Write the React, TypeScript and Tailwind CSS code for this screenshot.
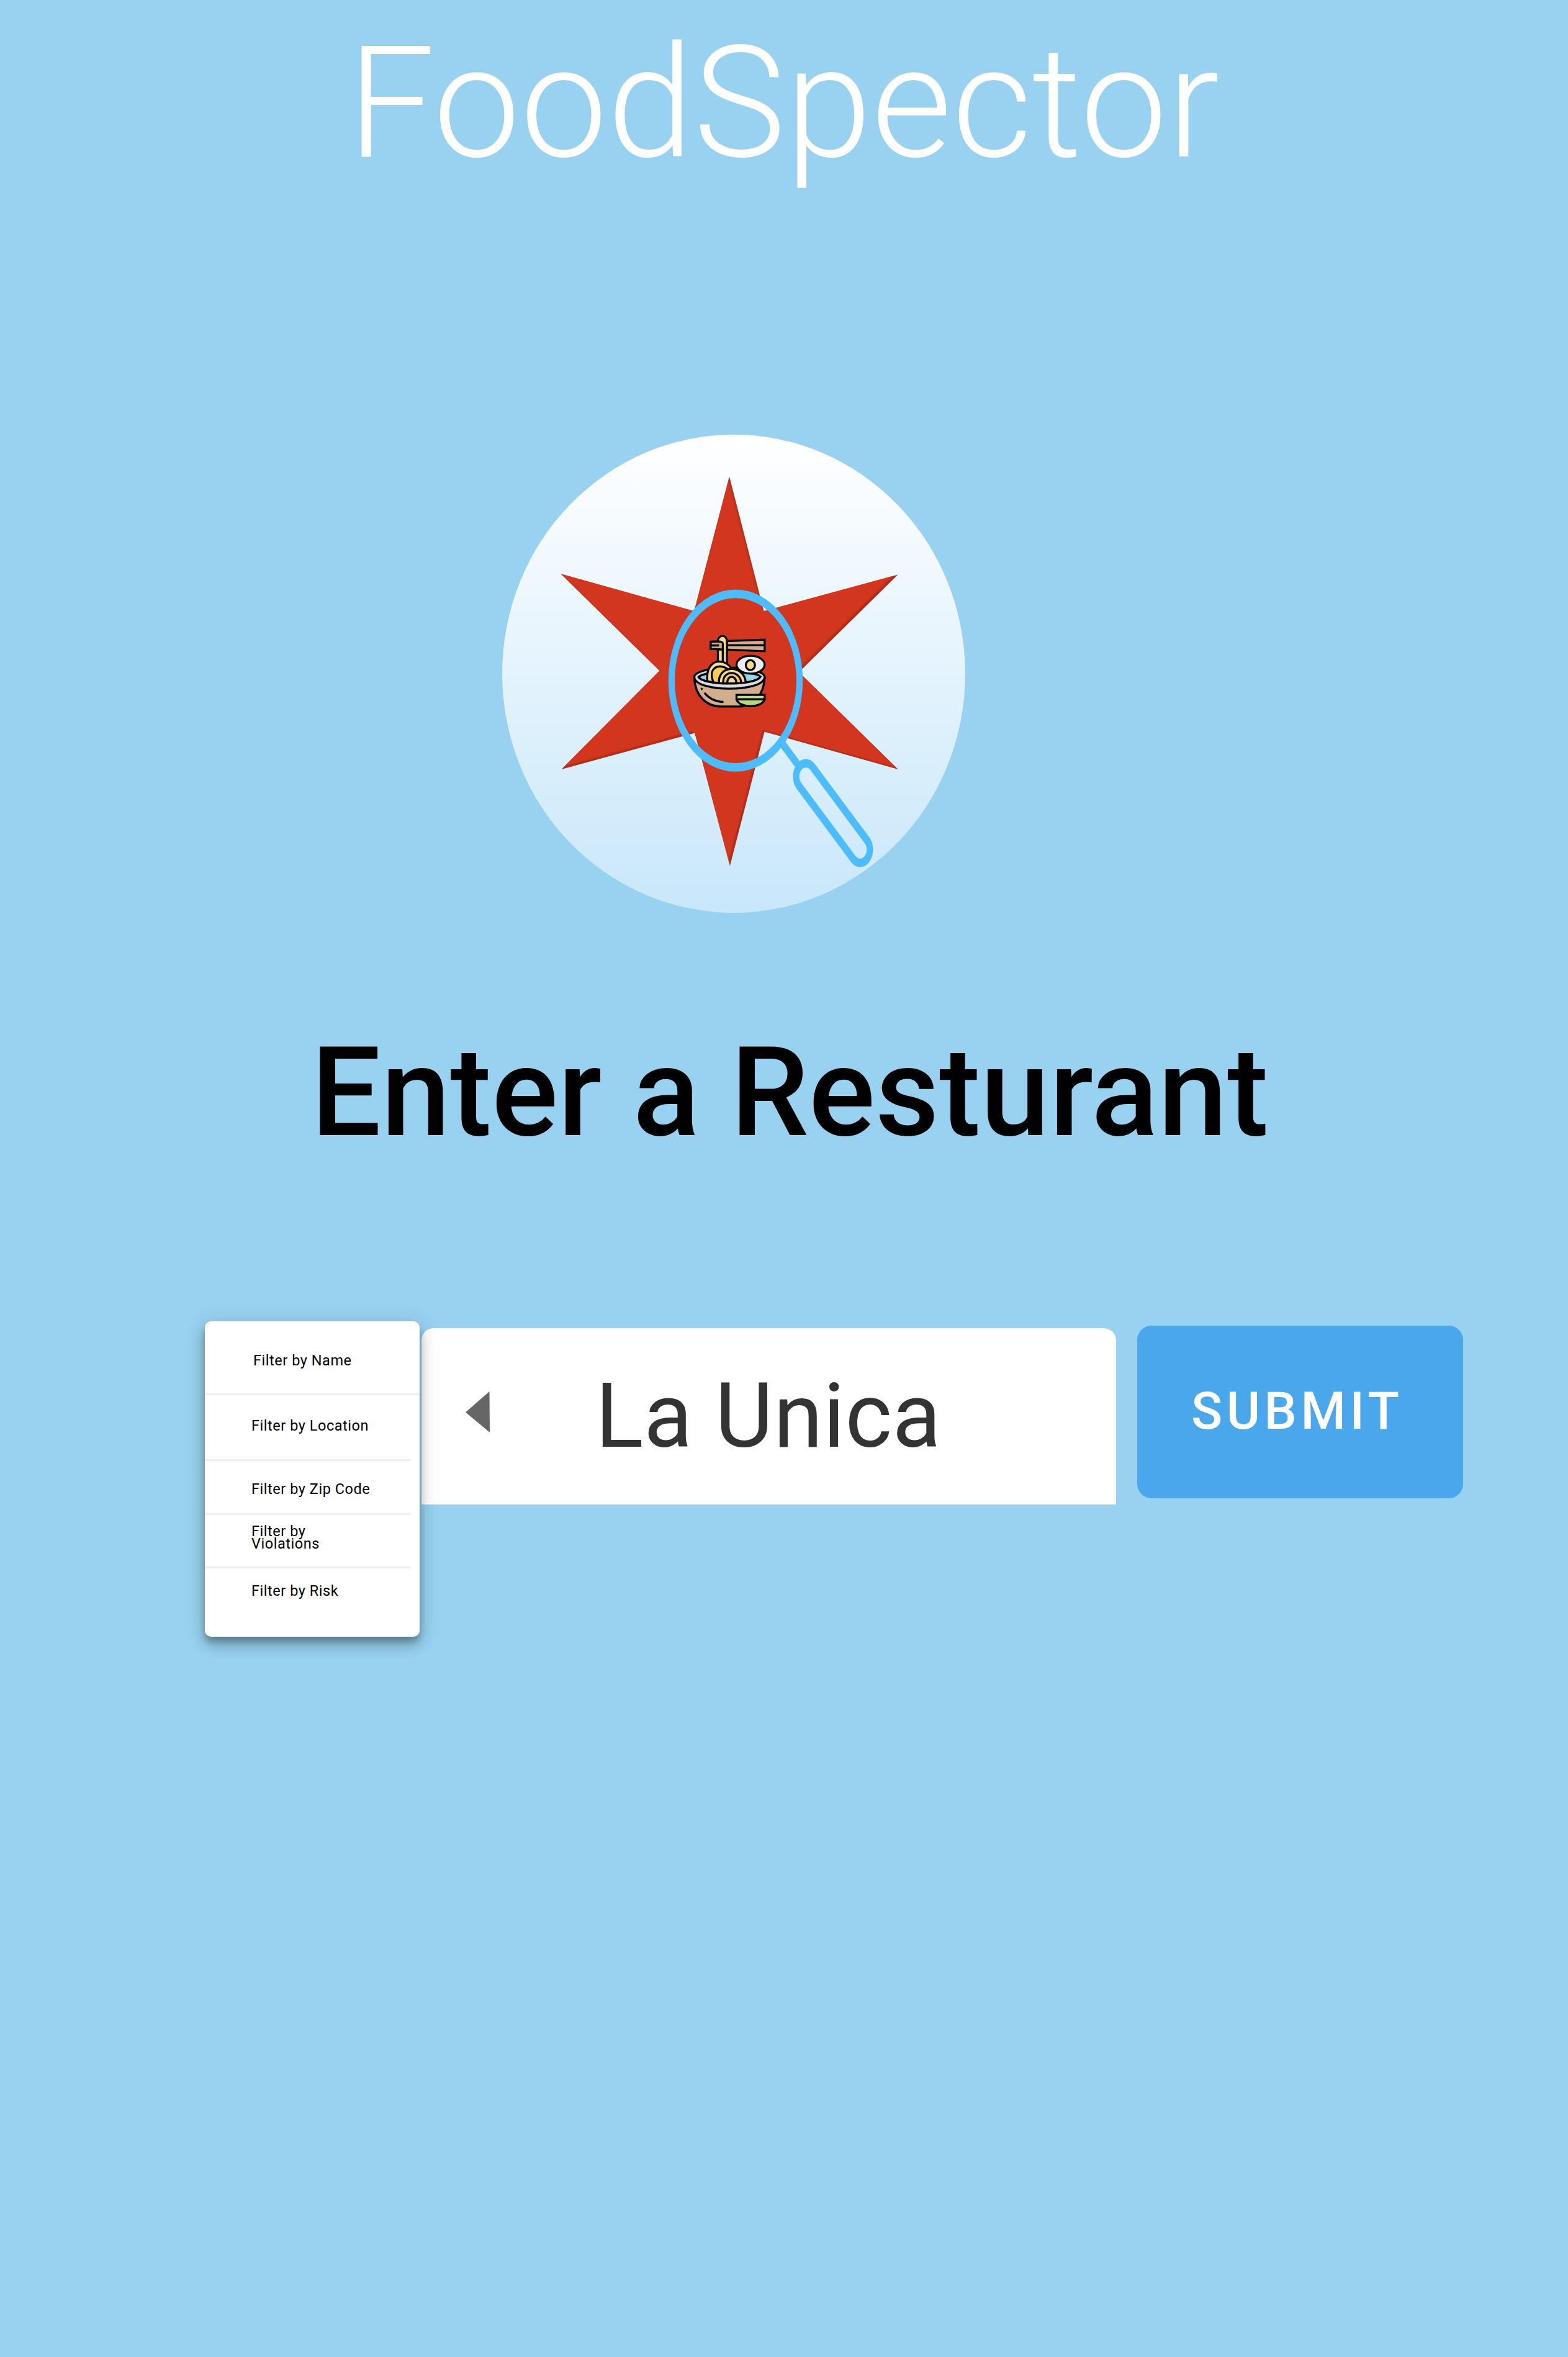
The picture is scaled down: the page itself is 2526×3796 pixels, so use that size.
const STAR =
  "M1175.5 767 L1231 983.7 L1447 925 L1287.6 1082 L1447.3 1238.4 L1232 1178 L1176.4 1394 L1119.8 1180 L905 1238.4 L1063 1079.8 L904 923.8 L1118.8 983.7 Z";

function RamenBowl() {
  return (
    <g transform="translate(1090 1000) scale(0.33333)" stroke="#000" strokeWidth="10" strokeLinejoin="miter">
      {/* chopsticks and lifted noodles */}
      <path d="M201 205 V136 H225 V205 Z" fill="#f9dc8c" />
      <path d="M166 99 L427 89 V145 L166 134 Z" fill="#d3ae8e" />
      <path d="M166 117 H207 M245 116 H427" fill="none" />
      <path d="M201 97 C201 62 245 62 245 97 V215 H225 V110 C225 100 219 97 201 97 Z" fill="#f9dc8c" />
      {/* rim and broth */}
      <ellipse cx="257" cy="270" rx="170" ry="46" fill="#dadae4" />
      <path d="M107 270 C130 238 382 238 407 268 C382 312 135 312 107 270 Z" fill="#8ed8f0" strokeLinejoin="round" />
      {/* noodle swirls */}
      <path d="M150 290 C138 170 250 175 270 240 L230 305 Z" fill="#f9dc8c" strokeLinejoin="round" />
      <path d="M180 296 C150 225 205 200 250 232 L225 300 Z" fill="#f8ce58" strokeLinejoin="round" />
      <path d="M207 301 C195 210 330 205 336 298 Z" fill="#f9dc8c" strokeLinejoin="round" />
      <path d="M227 301 C220 233 312 233 314 301 Z" fill="#f8ce58" strokeLinejoin="round" />
      <path d="M247 301 C243 258 292 258 290 301 Z" fill="#f9dc8c" strokeLinejoin="round" />
      {/* front of the rim */}
      <path d="M88 272 L107 270 C135 312 382 312 407 268 L426 272 C419 344 95 344 88 272 Z" fill="#dadae4" stroke="none" />
      <path d="M107 270 C135 312 382 312 407 268" fill="none" strokeLinecap="round" />
      {/* body */}
      <path
        d="M87 272 C90 360 145 412 215 412 H300 C370 412 423 360 427 272 C415 344 99 344 87 272 Z"
        fill="#d3ae8e"
        strokeLinejoin="round"
      />
      <path d="M136 346 Q171 388 228 390" fill="none" />
      <path d="M123 320 L130 327 L123 334 L116 327 Z" fill="#000" stroke="none" />
      {/* egg */}
      <ellipse cx="359" cy="210" rx="68" ry="43" fill="#ececf1" />
      <ellipse cx="358" cy="212" rx="22" ry="24" fill="#f9dc8c" />
      {/* side dish */}
      <path d="M291 377 C305 422 413 422 427 377 Z" fill="#b6d780" strokeLinejoin="round" />
      <path d="M291 356 H427 V377 H291 Z" fill="#c3dc94" />
    </g>
  );
}

function Logo() {
  return (
    <svg className="block h-[770px] w-[746px]" viewBox="809.5 699.5 746 770">
      <defs>
        <linearGradient id="disc" x1="0" y1="0" x2="0" y2="1">
          <stop offset="0" stopColor="#ffffff" />
          <stop offset="1" stopColor="#c8e7fa" />
        </linearGradient>
        <clipPath id="star">
          <path d={STAR} />
        </clipPath>
        <filter id="soft" x="-5%" y="-5%" width="110%" height="110%" colorInterpolationFilters="sRGB">
          <feGaussianBlur stdDeviation="0.8" />
        </filter>
      </defs>
      <ellipse cx="1182.5" cy="1084.5" rx="373" ry="385" fill="url(#disc)" />
      <path d={STAR} fill="#b02d18" />
      <g clipPath="url(#star)">
        <path d={STAR} fill="#d3361e" transform="translate(-3 -3)" filter="url(#soft)" />
      </g>
      <RamenBowl />
      <g transform="scale(1 1.356)" fill="none" stroke="#4dbcff" strokeWidth="10.2">
        <circle cx="1185.5" cy="808" r="103.1" />
        <path d="M1260 882 L1287 909" />
        <rect x="1283.1" y="906.3" width="154.5" height="31.4" rx="15.7" transform="rotate(44.8 1298.8 922)" />
      </g>
    </svg>
  );
}

function FilterMenu() {
  return (
    <ul className="relative z-10 h-[508px] w-[346px] rounded-[10px] bg-white text-[23.5px] leading-[20px] tracking-[0.54px] text-black shadow-[0_8px_10px_rgba(0,0,0,0.2),0_4px_36px_rgba(0,0,0,0.14),0_14px_22px_rgba(0,0,0,0.2)]">
      <li className="h-[119px] border-b-3 border-[#eeeeee] pt-[53px] pl-[78px]">Filter by Name</li>
      <li className="h-[106px] w-[331px] border-b-3 border-[#eeeeee] pt-[39px] pl-[75px]">Filter by Location</li>
      <li className="h-[87px] w-[331px] border-b-3 border-[#eeeeee] pt-[35px] pl-[75px]">Filter by Zip Code</li>
      <li className="h-[86px] w-[331px] border-b-3 border-[#eeeeee] pt-[16px] pl-[75px]">
        Filter by
        <br />
        Violations
      </li>
      <li className="pt-[26px] pl-[75px]">Filter by Risk</li>
    </ul>
  );
}

export default function App() {
  return (
    <main className="flex h-[3796px] w-[2526px] flex-col items-start overflow-hidden bg-[#98d2f0] pt-[42px] font-['Roboto',sans-serif]">
      <h1 className="ml-[560px] text-[250px] leading-none font-light whitespace-nowrap text-white">FoodSpector</h1>
      <div className="mt-[408px] ml-[809px]">
        <Logo />
      </div>
      <h2 className="mt-[190px] ml-[501px] text-[200px] leading-none font-medium whitespace-nowrap text-black">
        Enter a Resturant
      </h2>
      <div className="mt-[268px] ml-[330px] flex items-start">
        <FilterMenu />
        <div className="mt-[11px] ml-[3px] flex h-[284px] w-[1119px] items-start rounded-t-[20px] bg-white">
          <svg className="mt-[102px] ml-[71px] h-[66px] w-[39px]" viewBox="0 0 39 66">
            <path d="M0 33.5 L38.5 0 L39 66 Z" fill="#666666" />
          </svg>
          <span className="mt-[70px] ml-[170px] text-[144px] leading-none tracking-[0.5px] whitespace-nowrap text-[#333333]">
            La Unica
          </span>
        </div>
        <button className="mt-[7px] ml-[34px] flex h-[278px] w-[525px] items-start rounded-[23px] bg-[#4ba7eb] pt-[96px] pl-[87px] text-[83px] leading-none font-medium tracking-[6.5px] text-white">
          SUBMIT
        </button>
      </div>
    </main>
  );
}
